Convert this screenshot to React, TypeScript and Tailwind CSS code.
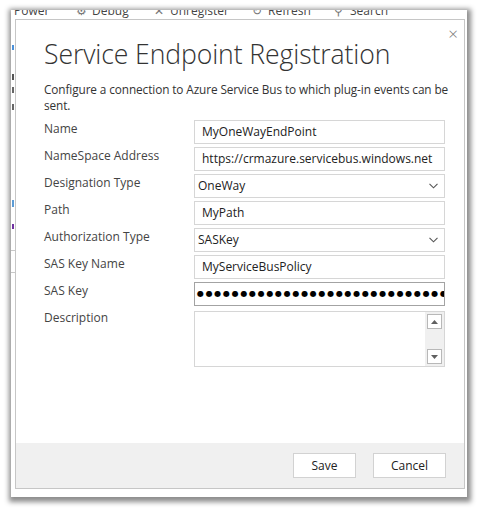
import React from "react";

const font = { fontFamily: '"Open Sans", "Noto Sans", sans-serif' };

type Field = {
  label: string;
  kind: "text" | "select" | "password" | "area";
  value?: string;
};

const fields: Field[] = [
  { label: "Name", kind: "text", value: "MyOneWayEndPoint" },
  { label: "NameSpace Address", kind: "text", value: "https://crmazure.servicebus.windows.net" },
  { label: "Designation Type", kind: "select", value: "OneWay" },
  { label: "Path", kind: "text", value: "MyPath" },
  { label: "Authorization Type", kind: "select", value: "SASKey" },
  { label: "SAS Key Name", kind: "text", value: "MyServiceBusPolicy" },
  { label: "SAS Key", kind: "password" },
  { label: "Description", kind: "area" },
];

const Chevron = () => (
  <svg width="9" height="6" viewBox="0 0 9 6" className="shrink-0">
    <path d="M0.5 0.8 L4.5 4.8 L8.5 0.8" fill="none" stroke="#555" strokeWidth="1.1" />
  </svg>
);

const FieldInput: React.FC<{ field: Field }> = ({ field }) => {
  if (field.kind === "select") {
    return (
      <div className="flex h-[24px] items-center justify-between border border-[#d6d6d6] bg-white pl-[3px] pr-[6px] text-[12px] text-[#222]">
        <span>{field.value}</span>
        <Chevron />
      </div>
    );
  }
  if (field.kind === "password") {
    return (
      <div
        className="flex h-[24px] items-center overflow-hidden whitespace-nowrap border border-[#a3a3a3] bg-white pl-[2px] text-[8px] leading-none tracking-[1.7px] text-black"
        style={{ fontFamily: '"DejaVu Sans", sans-serif' }}
      >
        {"●".repeat(40)}
      </div>
    );
  }
  if (field.kind === "area") {
    return (
      <div className="mt-[2px] flex h-[56px] justify-end border border-[#d6d6d6] bg-white">
        <div className="flex w-[19px] flex-col justify-between bg-[#f0f0f0] p-[2px]">
          <div className="flex h-[15px] w-[15px] items-center justify-center border border-[#b8b8b8] bg-white">
            <svg width="7" height="4" viewBox="0 0 7 4"><path d="M0 4 L3.5 0 L7 4 Z" fill="#606060" /></svg>
          </div>
          <div className="flex h-[15px] w-[15px] items-center justify-center border border-[#b8b8b8] bg-white">
            <svg width="7" height="4" viewBox="0 0 7 4"><path d="M0 0 L3.5 4 L7 0 Z" fill="#606060" /></svg>
          </div>
        </div>
      </div>
    );
  }
  return (
    <div className="flex h-[24px] items-center border border-[#d6d6d6] bg-white pl-[7px] text-[12px] text-[#222]">
      {field.value}
    </div>
  );
};

export default function App() {
  return (
    <div className="h-[509px] w-[479px] bg-white pl-[11px] pt-[10px]" style={font}>
      <div className="flex h-[487px] w-[456px] flex-col bg-white shadow-[1px_2px_5px_3px_rgba(0,0,0,0.45)]">
        {/* toolbar behind the dialog, mostly hidden */}
        <div className="h-[9px] overflow-hidden">
          <div className="-mt-[8px] flex items-center gap-[4px] whitespace-nowrap pl-[3px] text-[12px] text-[#444]">
            <span className="w-[58px]">Power</span>
            <span className="w-[12px] text-[#777]">⚙</span>
            <span className="w-[58px]">Debug</span>
            <span className="w-[12px] text-[#777]">✕</span>
            <span className="w-[78px]">Unregister</span>
            <span className="w-[12px] text-[#777]">↻</span>
            <span className="w-[62px]">Refresh</span>
            <span className="w-[12px] text-[#777]">⚲</span>
            <span>Search</span>
          </div>
        </div>

        <div className="flex flex-1">
          {/* sliver of page at the left */}
          <div className="flex w-[4px] flex-col">
            <div className="h-[26px]" />
            <div className="ml-[1px] h-[5px] w-[2px] bg-[#4a90d9]" />
            <div className="h-[24px]" />
            <div className="ml-[1px] h-[6px] w-[2px] bg-[#555]" />
            <div className="h-[7px]" />
            <div className="ml-[1px] h-[6px] w-[2px] bg-[#666]" />
            <div className="h-[11px]" />
            <div className="ml-[1px] h-[6px] w-[2px] bg-[#666]" />
            <div className="h-[90px]" />
            <div className="ml-[1px] h-[7px] w-[2px] bg-[#5b9bd5]" />
            <div className="h-[17px]" />
            <div className="ml-[1px] h-[5px] w-[2px] bg-[#7030a0]" />
            <div className="h-[22px] border-b border-[#c8c8c8]" />
            <div className="h-[22px] border-b border-[#c8c8c8]" />
          </div>

          {/* dialog */}
          <div className="flex h-[470px] w-[450px] flex-col border border-[#c6c6c6] bg-white">
            <div className="flex-1 pl-[28px] pr-[18px]">
              <div className="flex h-[12px] justify-end pt-[5px]">
                <span className="-mr-[12px] text-[17px] font-light leading-none text-[#777]">×</span>
              </div>
              <h1 className="mt-[5px] text-[26.6px] font-light leading-[34px] tracking-[-0.1px] text-[#333]">
                Service Endpoint Registration
              </h1>
              <p className="mt-[10px] w-[412px] text-[11.8px] leading-[16px] tracking-[-0.1px] text-[#333]">
                Configure a connection to Azure Service Bus to which plug-in events can be sent.
              </p>
              <div className="mt-[7px] flex flex-col gap-[3px]">
                {fields.map((f) => (
                  <div key={f.label} className="flex items-start">
                    <div className="w-[150px] text-[12px] leading-[17px] text-[#444]">
                      {f.label}
                    </div>
                    <div className="w-[251px]">
                      <FieldInput field={f} />
                    </div>
                  </div>
                ))}
              </div>
            </div>
            <div className="flex h-[45px] items-center justify-end gap-[17px] bg-[#f0f0f0] pr-[18px]">
              <button className="h-[25px] w-[63px] border border-[#d2d2d2] bg-white text-[12px] text-[#222]">
                Save
              </button>
              <button className="h-[25px] w-[73px] border border-[#d2d2d2] bg-white text-[12px] text-[#222]">
                Cancel
              </button>
            </div>
          </div>
          <div className="w-[2px]" />
        </div>
      </div>
    </div>
  );
}
